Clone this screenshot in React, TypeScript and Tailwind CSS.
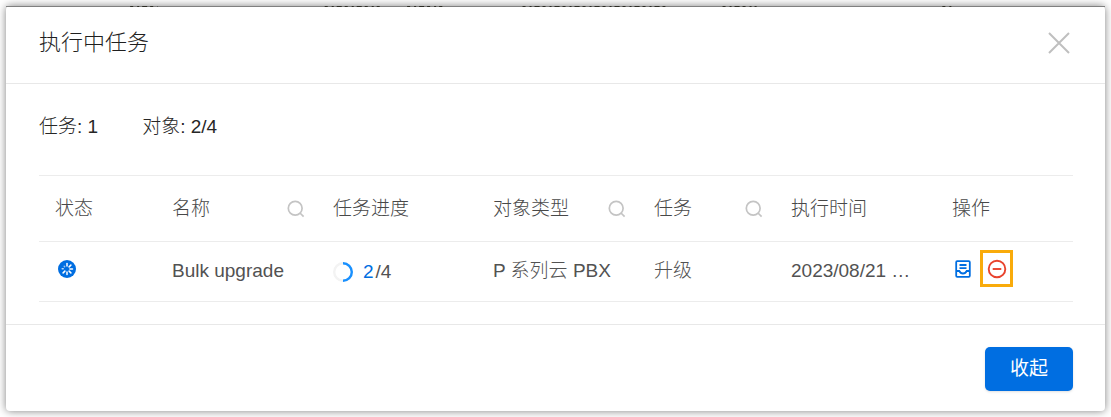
import React from 'react';

const columns = [
  { title: '状态', width: 'w-[117px]' },
  { title: '名称', width: 'w-[161px]', search: true },
  { title: '任务进度', width: 'w-[160px]' },
  { title: '对象类型', width: 'w-[161px]', search: true },
  { title: '任务', width: 'w-[137px]', search: true },
  { title: '执行时间', width: 'w-[161px]' },
  { title: '操作', width: 'w-[137px]' },
];

const tasks = [
  { name: 'Bulk upgrade', done: 2, total: 4, type: 'P 系列云 PBX', task: '升级', time: '2023/08/21 …' },
];

// top edges of the page text that show above the dialog
const pageText = [
  { x1: '11.3%', x2: '13.8%' },
  { x1: '29%', x2: '34%' },
  { x1: '36.5%', x2: '39.7%' },
  { x1: '47%', x2: '60%' },
  { x1: '65.2%', x2: '68.3%' },
  { x1: '85.2%', x2: '86.2%' },
];

const CloseIcon = () => (
  <svg viewBox="0 0 22 22" className="size-[22px]" fill="none" stroke="#bfbfbf" strokeWidth="2">
    <path d="M1 1l20 20M21 1L1 21" />
  </svg>
);

const SearchIcon = () => (
  <svg viewBox="0 0 18 18" className="size-[18px]" fill="none" stroke="#c4c4c4" strokeWidth="1.7">
    <circle cx="8.2" cy="8.2" r="6.9" />
    <path d="M13 13l3.6 3.6" />
  </svg>
);

const RunningIcon = () => (
  <svg viewBox="0 0 18 18" className="ml-[3px] size-[18px]" role="img" aria-label="执行中">
    <circle cx="9" cy="9" r="9" fill="#006ee1" />
    <g stroke="#fff" strokeWidth="1.5" strokeLinecap="round">
      <path d="M9 3.5v2.6" />
      <path d="M12.9 5.1l-1.8 1.8" />
      <path d="M11.9 9h2.6" />
      <path d="M11.1 11.1l1.8 1.8" />
      <path d="M9 11.9v2.6" />
      <path d="M6.9 11.1l-1.8 1.8" />
      <path d="M4.200 8.800h1" opacity=".75" />
      <path d="M6.200 6.200l.4.4" opacity=".6" />
    </g>
  </svg>
);

const ProgressRing = () => (
  <svg viewBox="0 0 20 20" className="size-5" fill="none" strokeWidth="2.4">
    <circle cx="10" cy="10" r="8.8" stroke="#f3f3f3" />
    <path d="M10 1.2a8.8 8.8 0 0 1 0 17.6" stroke="#1890ff" />
  </svg>
);

const DetailIcon = () => (
  <svg viewBox="0 0 16 18" className="h-[18px] w-4" fill="none" stroke="#006ee1" strokeWidth="1.8">
    <rect x="1.2" y="1.2" width="13.6" height="15.6" rx="1" />
    <path d="M4.5 5h7M4.5 8.2h7" />
    <path d="M1.2 11h3.1c.8 1.700 2 2.500 3.700 2.500s2.900-.8 3.700-2.500h3.100" />
  </svg>
);

const StopIcon = () => (
  <svg viewBox="0 0 20 20" className="size-5" fill="none" stroke="#e8432d" strokeWidth="1.9">
    <circle cx="10" cy="10" r="8.3" />
    <path d="M5.7 10h8.6" />
  </svg>
);

const App: React.FC = () => {
  return (
    <div className="bg-white px-1.5 pt-1.5 pb-1.5 font-['Liberation_Sans','Noto_Sans_CJK_SC',sans-serif]">
      <div className="rounded-sm bg-white shadow-[0_0_9px_rgba(0,0,0,0.5)]">
        <svg className="block h-px w-full bg-[#808080]" stroke="#2b2b24" strokeWidth="2" strokeDasharray="3 4 2 3 5 3">
          {pageText.map((item) => (
            <line key={item.x1} x1={item.x1} x2={item.x2} y1="0" y2="0" />
          ))}
        </svg>
        <section role="dialog" aria-labelledby="dialog-title">
          <header className="flex h-[77px] items-center justify-between border-b border-[#e8e8e8] pr-[35px] pb-1 pl-[33px]">
            <h2 id="dialog-title" className="text-[22px] leading-8 font-light text-[#1f1f1f]">执行中任务</h2>
            <button type="button" aria-label="关闭" className="cursor-pointer">
              <CloseIcon />
            </button>
          </header>

          <div className="px-[33px] pt-[29px] pb-[22px]">
            <div className="flex gap-11 text-[19px] leading-7 font-light text-[#262626]">
              <span>任务: 1</span>
              <span>对象: 2/4</span>
            </div>

            <table className="mt-[34px] w-full table-fixed border-separate border-spacing-0 text-left text-[19px] leading-7 text-[#484848]">
              <thead>
                <tr>
                  {columns.map((col) => (
                    <th
                      key={col.title}
                      scope="col"
                      className={`${col.width} h-[67px] border-y border-[#ececec] pr-3 pl-4 font-light`}
                    >
                      <div className="flex items-center justify-between">
                        {col.title}
                        {col.search && (
                          <button type="button" aria-label={`搜索${col.title}`} className="cursor-pointer">
                            <SearchIcon />
                          </button>
                        )}
                      </div>
                    </th>
                  ))}
                </tr>
              </thead>
              <tbody>
                {tasks.map((task) => (
                  <tr key={task.name} className="font-light text-[#525252] *:h-[60px] *:border-b *:border-[#ececec] *:pl-4">
                    <td className="pb-1.5"><RunningIcon /></td>
                    <td className="pb-0.5">{task.name}</td>
                    <td>
                      <div className="flex items-center">
                        <ProgressRing />
                        <span className="ml-2.5 text-[#006ee1]">{task.done}</span>
                        <span className="ml-0.5">/{task.total}</span>
                      </div>
                    </td>
                    <td className="pb-0.5">{task.type}</td>
                    <td className="pb-0.5">{task.task}</td>
                    <td className="pb-0.5 whitespace-nowrap">{task.time}</td>
                    <td className="pb-1.5">
                      <div className="flex items-center gap-[9px]">
                        <button type="button" aria-label="详情" className="ml-[3px] cursor-pointer">
                          <DetailIcon />
                        </button>
                        <button
                          type="button"
                          aria-label="停止"
                          className="flex h-[37px] w-[33px] cursor-pointer items-center justify-center border-3 border-[#f9ab0b]"
                        >
                          <StopIcon />
                        </button>
                      </div>
                    </td>
                  </tr>
                ))}
              </tbody>
            </table>
          </div>

          <footer className="flex justify-end border-t border-[#e8e8e8] pt-[22px] pr-8 pb-5">
            <button
              type="button"
              className="h-11 w-[88px] cursor-pointer rounded-[5px] bg-[#006ee1] text-[19px] text-white shadow-sm"
            >
              收起
            </button>
          </footer>
        </section>
      </div>
    </div>
  );
};

export default App;
